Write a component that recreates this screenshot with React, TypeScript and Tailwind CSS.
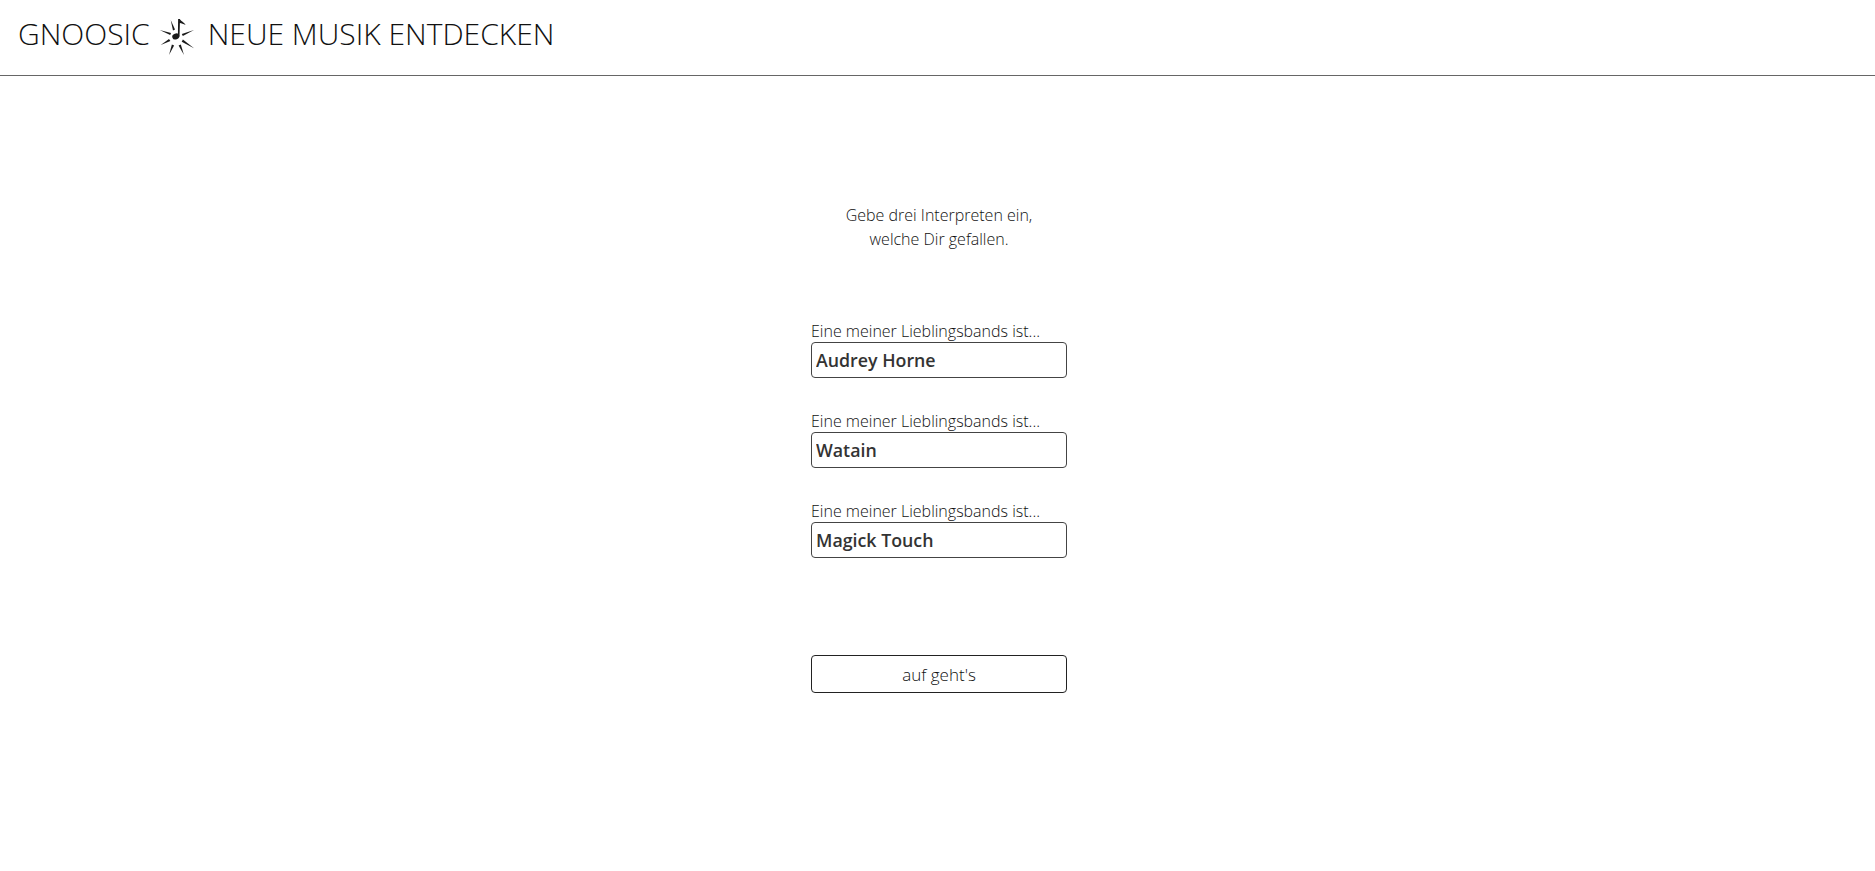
import React from 'react';

const bands = ['Audrey Horne', 'Watain', 'Magick Touch'];

const Logo = () => (
  <svg viewBox="0 0 38 40" className="w-[38px] h-[40px] ml-[8px] mr-[12px] mt-[4px] shrink-0" fill="#1a1a1a">
    {/* spokes taper towards the outside */}
    <path d="M12.7 4 L17 13.4 L15 14.6 Z" />
    <path d="M1.7 14 L13 16.9 L12.2 19.1 Z" />
    <path d="M2.7 29 L11 23 L12.4 25 Z" />
    <path d="M11 39 L13.9 28.6 L16.1 29.4 Z" />
    <path d="M26 39 L20.6 29.4 L22.8 28.6 Z" />
    <path d="M36 32.3 L24.9 23.6 L23.7 25.8 Z" />
    <path d="M36 14 L23.8 17.9 L24.8 20.1 Z" />
    <ellipse cx="17.8" cy="20.4" rx="3.6" ry="2.9" transform="rotate(-20 17.8 20.4)" />
    <path d="M19.9 20 L20.1 3 L21.9 3 C22.5 5 25.8 5.6 27.6 9 C25.5 7.6 23.2 7.2 21.9 6.9 L21.5 20.4 Z" />
  </svg>
);

export default function App() {
  return (
    <div className="min-h-screen bg-white text-[#111] font-['Open_Sans',sans-serif]">
      <header className="h-[76px] border-b border-[#666] flex items-center pl-[18px] pb-[7px] text-[30px] font-light leading-none">
        <span>GNOOSIC</span>
        <Logo />
        <span>NEUE MUSIK ENTDECKEN</span>
      </header>

      <main className="w-[256px] ml-[811px] pt-[127px]">
        <p className="text-[16px] leading-[24px] font-light text-center">
          Gebe drei Interpreten ein,
          <br />
          welche Dir gefallen.
        </p>

        <div className="mt-[68px] flex flex-col gap-[31px]">
          {bands.map((band) => (
            <label key={band} className="block">
              <span className="block h-[23px] text-[16px] leading-[25px] font-light">Eine meiner Lieblingsbands ist...</span>
              <input
                readOnly
                value={band}
                className="block w-full h-[36px] px-[4px] border border-[#444] rounded-[4px] text-[17.8px] font-semibold text-[#333] outline-none"
              />
            </label>
          ))}
        </div>

        <button className="mt-[97px] block w-full h-[38px] pt-[1px] border border-[#222] rounded-[4px] text-[17px] font-light bg-white">
          auf geht's
        </button>
      </main>
    </div>
  );
}
